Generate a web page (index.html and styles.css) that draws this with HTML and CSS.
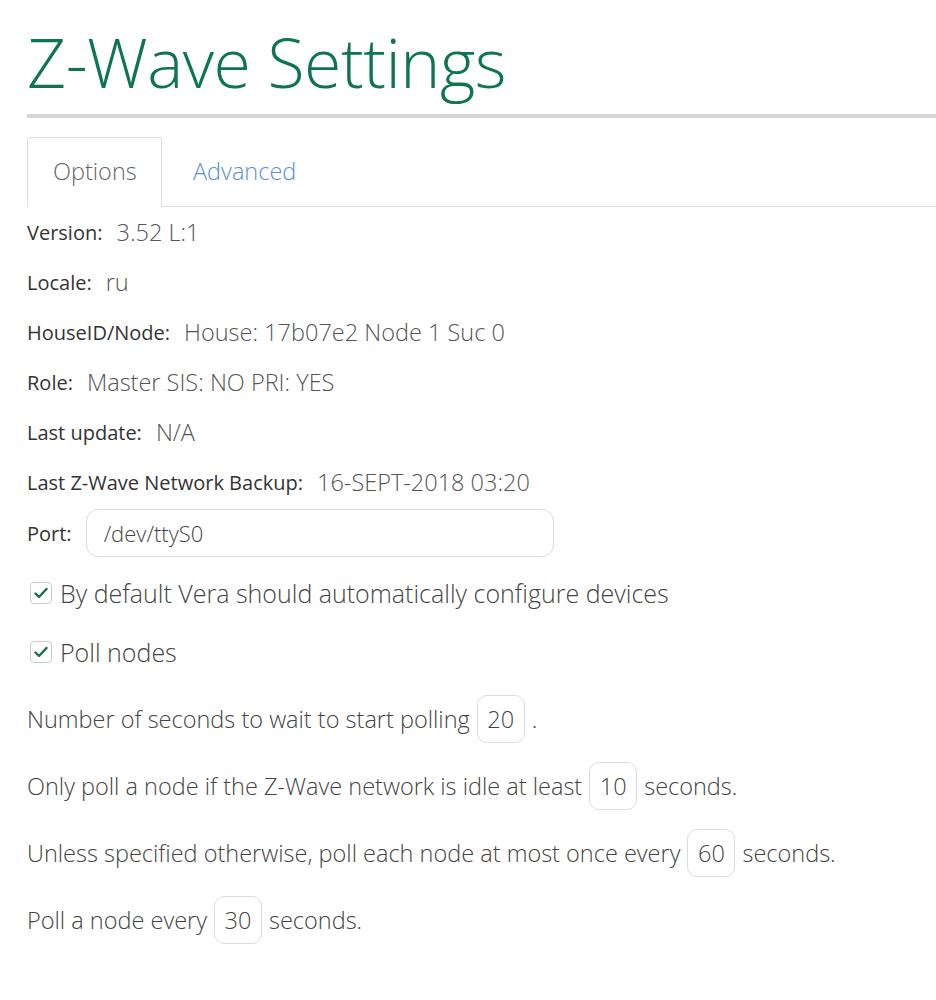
FILE: index.html
```html
<!DOCTYPE html>
<html>
<head>
<meta charset="UTF-8">
<link rel="stylesheet" href="styles.css">
</head>
<body>
<div class="wrapper">
	<h1 class="title">Z-Wave Settings</h1>

	<ul class="tabs">
		<li class="tab active">Options</li>
		<li class="tab">Advanced</li>
	</ul>

	<div class="info">
		<div class="row"><span class="label">Version:</span><span class="value">3.52 L:1</span></div>
		<div class="row"><span class="label">Locale:</span><span class="value">ru</span></div>
		<div class="row"><span class="label">HouseID/Node:</span><span class="value">House: 17b07e2 Node 1 Suc 0</span></div>
		<div class="row"><span class="label">Role:</span><span class="value">Master SIS: NO PRI: YES</span></div>
		<div class="row"><span class="label">Last update:</span><span class="value">N/A</span></div>
		<div class="row"><span class="label">Last Z-Wave Network Backup:</span><span class="value">16-SEPT-2018 03:20</span></div>
		<div class="row port"><span class="label">Port:</span><input class="text" type="text" value="/dev/ttyS0"></div>
	</div>

	<div class="checks">
		<label class="check"><span class="box"><svg width="14" height="12" viewBox="0 0 14 12"><path d="M1.5 6.5 L5 10 L12.5 2" fill="none" stroke="#16724c" stroke-width="2.4" stroke-linecap="round" stroke-linejoin="round"/></svg></span>By default Vera should automatically configure devices</label>
		<label class="check"><span class="box"><svg width="14" height="12" viewBox="0 0 14 12"><path d="M1.5 6.5 L5 10 L12.5 2" fill="none" stroke="#16724c" stroke-width="2.4" stroke-linecap="round" stroke-linejoin="round"/></svg></span>Poll nodes</label>
	</div>

	<div class="polling">
		<p class="line">Number of seconds to wait to start polling<input class="num" type="text" value="20">.</p>
		<p class="line">Only poll a node if the Z-Wave network is idle at least<input class="num" type="text" value="10">seconds.</p>
		<p class="line">Unless specified otherwise, poll each node at most once every<input class="num" type="text" value="60">seconds.</p>
		<p class="line">Poll a node every<input class="num" type="text" value="30">seconds.</p>
	</div>
</div>
</body>
</html>
```

FILE: styles.css
```css
body{
	margin:0;
	font-family:"Open Sans", "Liberation Sans", sans-serif;
	color:#555;
	background:#FFF;
}
h1,ul,li,p{
	margin:0;
	padding:0;
}
.wrapper{
	padding:0 0 0 27px;
}
.title{
	font-size:68px;
	font-weight:300;
	color:#0d7552;
	line-height:96px;
	padding-top:14px;
	border-bottom:4px solid #D6D6D6;
	padding-bottom:4px;
	letter-spacing:-0.5px;
}
.tabs{
	list-style:none;
	display:flex;
	margin-top:19px;
	border-bottom:1px solid #DDD;
}
.tab{
	font-size:23.5px;
	font-weight:300;
	height:68px;
	line-height:66px;
	padding:0 26px;
	color:#5d8fd0;
	border:1px solid transparent;
	border-bottom:none;
	border-radius:4px 4px 0 0;
	margin-bottom:-1px;
}
.tab.active{
	color:#666;
	background:#FFF;
	border-color:#DDD;
	height:69px;
	padding:0 25px;
	width:83px;
	text-align:center;
}
.tab + .tab{
	margin-left:4px;
}
.row{
	display:flex;
	align-items:center;
	height:50px;
}
.label{
	font-size:20px;
	color:#333;
	margin-right:14px;
}
.value{
	font-size:23.5px;
	font-weight:300;
	color:#555;
}
.row.port{
	height:52px;
}
.text{
	font-family:inherit;
	font-size:22px;
	font-weight:300;
	color:#444;
	width:468px;
	height:48px;
	box-sizing:border-box;
	border:1px solid #DDD;
	border-radius:12px;
	padding:0 17px;
	outline:none;
}
.checks{
	padding-top:4px;
}
.check{
	display:flex;
	align-items:center;
	height:59px;
	font-size:25px;
	font-weight:300;
	color:#444;
}
.box{
	width:22px;
	height:22px;
	box-sizing:border-box;
	border:1px solid #CCC;
	border-radius:4px;
	display:flex;
	align-items:center;
	justify-content:center;
	margin:0 8px 0 3px;
}
.polling{
	padding-top:4px;
}
.line{
	display:flex;
	align-items:center;
	height:67px;
	font-size:23.5px;
	font-weight:300;
	color:#444;
}
.num{
	font-family:inherit;
	font-size:23.5px;
	font-weight:300;
	color:#444;
	width:48px;
	height:48px;
	box-sizing:border-box;
	border:1px solid #DDD;
	border-radius:10px;
	text-align:center;
	padding:0;
	margin:0 7px;
	outline:none;
}
```
